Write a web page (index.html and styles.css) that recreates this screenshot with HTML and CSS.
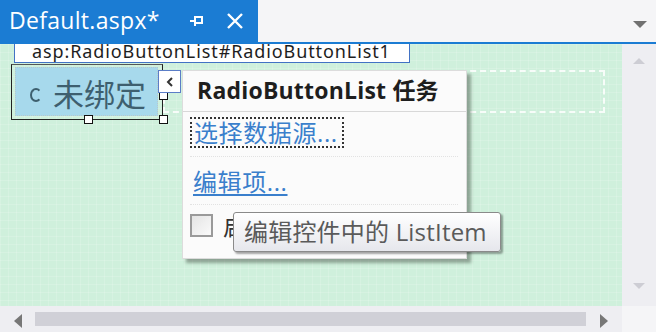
FILE: index.html
```html
<!DOCTYPE html>
<html lang="zh-CN">
<head>
  <meta charset="UTF-8">
  <title>Default.aspx - 设计</title>
  <link rel="stylesheet" href="styles.css">
</head>
<body>
  <div class="window">
    <div class="tabbar">
      <div class="tab">
        <span class="tab-title">Default.aspx*</span>
        <svg class="tab-pin" width="16" height="16" viewBox="0 0 16 16">
          <path d="M1 8h5M6 3v10M6 4h7v6H6M9 10h4" fill="none" stroke="#fff" stroke-width="2"/>
        </svg>
        <svg class="tab-close" width="18" height="18" viewBox="0 0 18 18">
          <path d="M2 2l14 14M16 2L2 16" stroke="#fff" stroke-width="2.4"/>
        </svg>
      </div>
      <div class="tab-fill">
        <span class="tab-menu"></span>
      </div>
    </div>
    <div class="tabline"></div>

    <div class="main">
      <div class="canvas">
        <div class="tag-label">asp:RadioButtonList#RadioButtonList1</div>
        <div class="control">
          <div class="control-inner">
            <span class="radio-mark"></span>
            <span class="control-text">未绑定</span>
          </div>
        </div>

        <div class="dashed-area"></div>
        <span class="handle h-bottom"></span>
        <span class="handle h-corner"></span>
        <span class="handle h-side"></span>
        <button class="smart-tag">
          <svg width="10" height="12" viewBox="0 0 10 12">
            <path d="M7 2L3 6l4 4" fill="none" stroke="#333" stroke-width="2"/>
          </svg>
        </button>

        <div class="task-panel">
          <div class="task-title">RadioButtonList 任务</div>
          <div class="task-body">
            <div class="task-row task-first">
              <a class="task-link focused">选择数据源...</a>
            </div>
            <div class="task-row task-second">
              <a class="task-link">编辑项...</a>
            </div>
            <div class="task-row task-check">
              <span class="checkbox"></span>
              <span class="check-label">启用 AutoPostBack</span>
            </div>
          </div>
        </div>

        <div class="tooltip">编辑控件中的 ListItem</div>
      </div>
      <div class="vscroll">
        <span class="arrow arrow-up"></span>
        <span class="arrow arrow-down"></span>
      </div>
    </div>

    <div class="hscroll">
      <span class="arrow arrow-left"></span>
      <div class="hthumb"></div>
      <span class="arrow arrow-right"></span>
      <div class="corner"></div>
    </div>
  </div>
</body>
</html>
```

FILE: styles.css
```css
body {
  margin: 0;
  font-family: 'Open Sans', 'Noto Sans CJK SC', sans-serif;
  background-color: #f5f5f7;
}

.window {
  width: 656px;
  height: 332px;
  display: flex;
  flex-direction: column;
  overflow: hidden;
}

/* tab strip */
.tabbar {
  height: 42px;
  display: flex;
}

.tab {
  width: 258px;
  background-color: #1b7cd3;
  display: flex;
  align-items: center;
  color: #fff;
}

.tab-title {
  font-size: 23px;
  margin-left: 9px;
  margin-top: -2px;
  letter-spacing: 0.3px;
}

.tab-pin {
  margin-left: 29px;
}

.tab-close {
  margin-left: 21px;
}

.tab-fill {
  flex: 1;
  background-color: #f5f5f7;
  display: flex;
  justify-content: flex-end;
  align-items: center;
}

.tab-menu {
  width: 0;
  height: 0;
  border-left: 7px solid transparent;
  border-right: 7px solid transparent;
  border-top: 7px solid #717171;
  margin-right: 9px;
  margin-top: 6px;
}

.tabline {
  height: 2px;
  background-color: #1b7cd3;
}

/* design surface */
.main {
  height: 262px;
  display: flex;
}

.canvas {
  flex: 1;
  position: relative;
  background-color: #cff0dc;
  background-image:
    linear-gradient(to right, rgba(255, 255, 255, 0.14) 1px, transparent 1px),
    linear-gradient(to bottom, rgba(255, 255, 255, 0.14) 1px, transparent 1px);
  background-size: 8px 8px;
}

.tag-label {
  margin-left: 14px;
  width: 377px;
  height: 18px;
  padding-left: 17px;
  background-color: #fff;
  border: 1px solid #4272c4;
  border-top: none;
  font-family: 'Noto Sans', 'Noto Sans CJK SC', sans-serif;
  font-size: 18px;
  line-height: 15px;
  letter-spacing: 0.9px;
  color: #1e1e1e;
  white-space: nowrap;
  overflow: hidden;
}

.control {
  margin-left: 11px;
  margin-top: 1px;
  width: 152px;
  height: 56px;
  border: 1px solid #222;
  border-top-color: #555;
  display: flex;
  padding: 2px 4px 3px 3px;
  box-sizing: border-box;
}

.control-inner {
  flex: 1;
  background-color: #a7d9ec;
  border: 1px dotted #b8c8cc;
  display: flex;
  align-items: center;
}

.radio-mark {
  width: 8px;
  height: 10px;
  margin-left: 14px;
  margin-right: 11px;
  margin-top: 6px;
  border: 2px solid #3d5f6e;
  border-right-color: transparent;
  border-radius: 50%;
}

.control-text {
  font-family: 'Noto Sans CJK SC', sans-serif;
  font-size: 31px;
  line-height: 1;
  color: #3e5f6f;
  margin-top: 1px;
}

.dashed-area {
  position: absolute;
  left: 163px;
  top: 26px;
  width: 438px;
  height: 39px;
  border: 2px dashed rgba(255, 255, 255, 0.85);
}

.handle {
  position: absolute;
  width: 7px;
  height: 7px;
  background-color: #fff;
  border: 1px solid #111;
}

.h-bottom {
  left: 84px;
  top: 71px;
}

.h-corner {
  left: 159px;
  top: 71px;
}

.h-side {
  left: 159px;
  top: 47px;
}

.smart-tag {
  position: absolute;
  left: 158px;
  top: 26px;
  width: 23px;
  height: 23px;
  padding: 0;
  background-color: #fff;
  border: 1px solid #5b7dc7;
  display: flex;
  align-items: center;
  justify-content: center;
}

/* smart tag task panel */
.task-panel {
  position: absolute;
  left: 182px;
  top: 26px;
  width: 283px;
  height: 187px;
  background-color: #fbfbfb;
  border: 1px solid #dcdcdc;
  box-shadow: 4px 4px 3px rgba(60, 70, 60, 0.45);
  overflow: hidden;
}

.task-title {
  height: 40px;
  padding-left: 14px;
  font-size: 23px;
  font-weight: bold;
  line-height: 38px;
  letter-spacing: 0.2px;
  color: #1e1e1e;
  border-bottom: 1px solid #d8d8d8;
  white-space: nowrap;
}

.task-body {
  padding: 5px 0 0 7px;
}

.task-row {
  border-bottom: 1px dotted #e2e2e2;
  margin-right: 8px;
}

.task-first {
  height: 39px;
}

.task-second {
  height: 47px;
}

.task-link {
  display: inline-block;
  font-size: 24px;
  line-height: 25px;
  letter-spacing: 0.6px;
  color: #3a7fcc;
  padding: 0 4px 0 3px;
  margin-top: 12px;
  text-decoration: underline;
  text-underline-offset: 3px;
  white-space: nowrap;
}

.task-link.focused {
  margin-top: 0;
  padding: 1px 4px 1px 2px;
  border: 2px dotted #333;
  text-decoration: none;
}

.task-check {
  border-bottom: none;
  display: flex;
  align-items: center;
  height: 40px;
}

.checkbox {
  width: 19px;
  height: 19px;
  flex-shrink: 0;
  border: 2px solid #9a9a9a;
  background: linear-gradient(135deg, #e4e4e4, #fafafa);
}

.check-label {
  margin-left: 10px;
  font-size: 23px;
  color: #333;
  white-space: nowrap;
}

.tooltip {
  position: absolute;
  left: 233px;
  top: 168px;
  width: 256px;
  height: 38px;
  padding-left: 10px;
  background: linear-gradient(to bottom, #ffffff, #e6e7ec);
  border: 1px solid #8a8a8a;
  border-radius: 3px;
  box-shadow: 2px 2px 2px rgba(0, 0, 0, 0.35);
  font-size: 24px;
  line-height: 38px;
  letter-spacing: 0.2px;
  color: #5a5a5a;
  white-space: nowrap;
}

/* scrollbars */
.vscroll {
  width: 34px;
  background-color: #eeeef2;
  position: relative;
}

.arrow {
  position: absolute;
  width: 0;
  height: 0;
}

.arrow-up {
  left: 11px;
  top: 14px;
  border-left: 6px solid transparent;
  border-right: 6px solid transparent;
  border-bottom: 6px solid #cdcdd4;
}

.arrow-down {
  left: 11px;
  top: 239px;
  border-left: 6px solid transparent;
  border-right: 6px solid transparent;
  border-top: 6px solid #cdcdd4;
}

.hscroll {
  height: 26px;
  background-color: #eeeef2;
  position: relative;
  display: flex;
  align-items: center;
}

.hthumb {
  margin-left: 35px;
  width: 551px;
  height: 14px;
  background-color: #d0d0d7;
}

.arrow-left {
  left: 14px;
  top: 8px;
  border-top: 7px solid transparent;
  border-bottom: 7px solid transparent;
  border-right: 8px solid #777;
}

.arrow-right {
  left: 600px;
  top: 8px;
  border-top: 7px solid transparent;
  border-bottom: 7px solid transparent;
  border-left: 8px solid #777;
}

.corner {
  margin-left: auto;
  width: 34px;
  height: 26px;
  background-color: #f5f5f7;
}
```
